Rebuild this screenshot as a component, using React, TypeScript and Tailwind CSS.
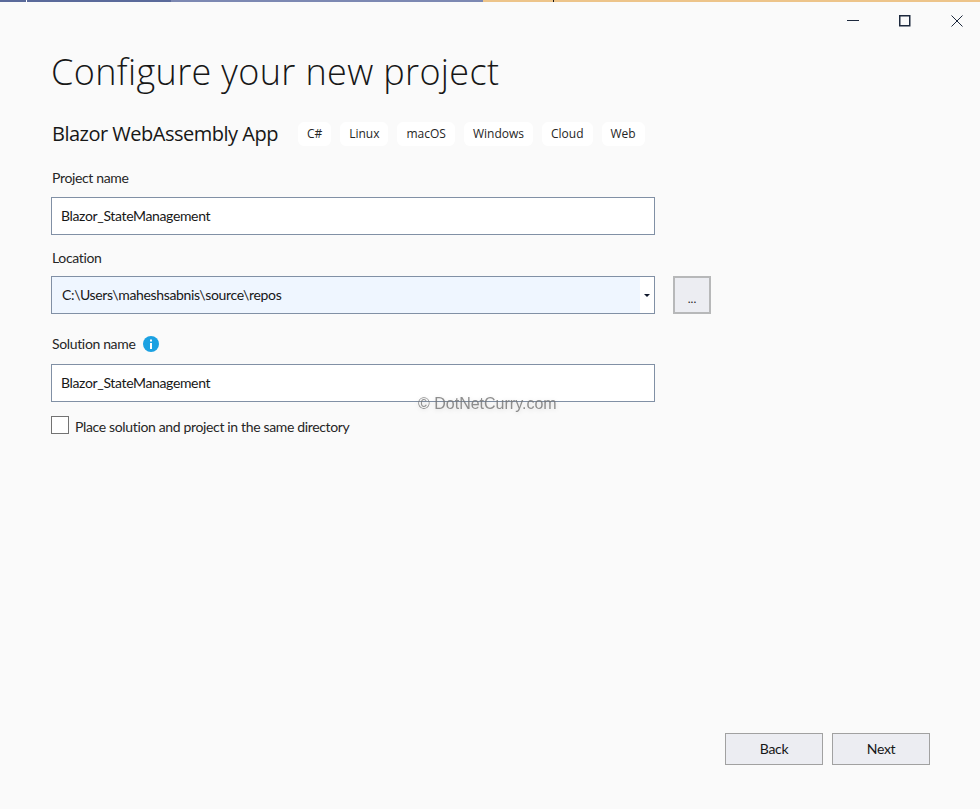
import React from 'react';

const tags = ['C#', 'Linux', 'macOS', 'Windows', 'Cloud', 'Web'];

const TextField = ({ value }: { value: string }) => (
  <div className="-ml-px flex h-9.5 w-[604px] items-center border border-slate-500/80 bg-white px-2.25 text-sm tracking-tight text-neutral-900">
    {value}
  </div>
);

const Label = ({ children }: { children: React.ReactNode }) => (
  <div className="text-sm leading-5 tracking-tight text-neutral-800">{children}</div>
);

const FooterButton = ({ children }: { children: React.ReactNode }) => (
  <button className="h-8 w-24.5 border border-neutral-400 bg-[#ecedf2] text-sm tracking-tight text-neutral-900">
    {children}
  </button>
);

const InfoIcon = () => (
  <svg viewBox="0 0 16 16" className="size-4">
    <circle cx="8" cy="8" r="8" fill="#1ba1e2" />
    <rect x="7" y="7" width="2" height="6" fill="#fff" />
    <rect x="7" y="3.5" width="2" height="2" fill="#fff" />
  </svg>
);

export default function App() {
  return (
    <div className="relative flex h-screen flex-col overflow-hidden bg-neutral-50 font-['Lato',sans-serif]">
      <div className="flex h-0.5">
        <div className="w-6.5 bg-[#5a6a9a]" />
        <div className="w-px bg-white" />
        <div className="w-36 bg-[#5a6a9a]" />
        <div className="w-78 bg-[#7c88b2]" />
        <div className="w-17.5 bg-[#edc48a]" />
        <div className="w-px bg-neutral-900" />
        <div className="flex-1 bg-[#edc48a]" />
      </div>

      <div className="flex justify-end gap-9.5 pt-3 pr-4 text-slate-800">
        <svg viewBox="0 0 14 14" className="size-3.5" fill="none" stroke="currentColor">
          <path d="M1 6.5H13" />
        </svg>
        <svg viewBox="0 0 14 14" className="size-3.5" fill="none" stroke="currentColor" strokeWidth="1.5">
          <rect x="1.75" y="1.75" width="10" height="10" />
        </svg>
        <svg viewBox="0 0 14 14" className="size-3.5" fill="none" stroke="currentColor">
          <path d="M1.5 1.5L12.5 12.5M12.5 1.5L1.5 12.5" />
        </svg>
      </div>

      <div className="flex flex-1 flex-col pl-13">
        <h1 className="mt-6 -ml-px font-['Open_Sans',sans-serif] text-4xl leading-10 font-light tracking-[0.01em] text-neutral-900">
          Configure your new project
        </h1>

        <div className="mt-7 flex items-center gap-5">
          <div className="font-['Open_Sans',sans-serif] text-xl tracking-tight text-neutral-900">
            Blazor WebAssembly App
          </div>
          <div className="flex gap-2.25">
            {tags.map((tag) => (
              <span
                key={tag}
                className="rounded-md bg-white px-2.25 py-0.5 font-['Open_Sans',sans-serif] text-xs leading-5 text-neutral-800"
              >
                {tag}
              </span>
            ))}
          </div>
        </div>

        <div className="mt-5">
          <Label>Project name</Label>
        </div>
        <div className="mt-2.25">
          <TextField value="Blazor_StateManagement" />
        </div>

        <div className="mt-3.25">
          <Label>Location</Label>
        </div>
        <div className="mt-2 -ml-px flex items-center gap-4.5">
          <div className="flex h-9.5 w-[604px] border border-slate-500/80 bg-white text-sm tracking-tight text-neutral-900">
            <div className="flex flex-1 items-center bg-blue-50 px-2.5">C:\Users\maheshsabnis\source\repos</div>
            <div className="flex w-3.5 items-center justify-center">
              <div className="size-0 border-x-3 border-t-3 border-x-transparent border-t-slate-900" />
            </div>
          </div>
          <button className="flex size-9.5 items-center justify-center border-2 border-neutral-400/70 bg-[#ecedf2] pt-2 text-xs text-neutral-800">
            ...
          </button>
        </div>

        <div className="mt-5 flex items-center gap-2">
          <Label>Solution name</Label>
          <InfoIcon />
        </div>
        <div className="mt-2.5">
          <TextField value="Blazor_StateManagement" />
        </div>

        <div className="mt-3.5 -ml-px flex items-start gap-1.5">
          <div className="size-4.5 border border-neutral-500 bg-white" />
          <div className="pt-px text-sm leading-5 tracking-tight text-neutral-800">
            Place solution and project in the same directory
          </div>
        </div>

        <div className="mt-auto flex justify-end gap-2.25 pr-12.5 pb-11">
          <FooterButton>Back</FooterButton>
          <FooterButton>Next</FooterButton>
        </div>
      </div>

      {/* watermark sits on top of the solution field */}
      <div className="absolute top-98 left-104.5 font-['Liberation_Sans',sans-serif] text-base text-neutral-500/80 drop-shadow-sm">
        © DotNetCurry.com
      </div>
    </div>
  );
}
